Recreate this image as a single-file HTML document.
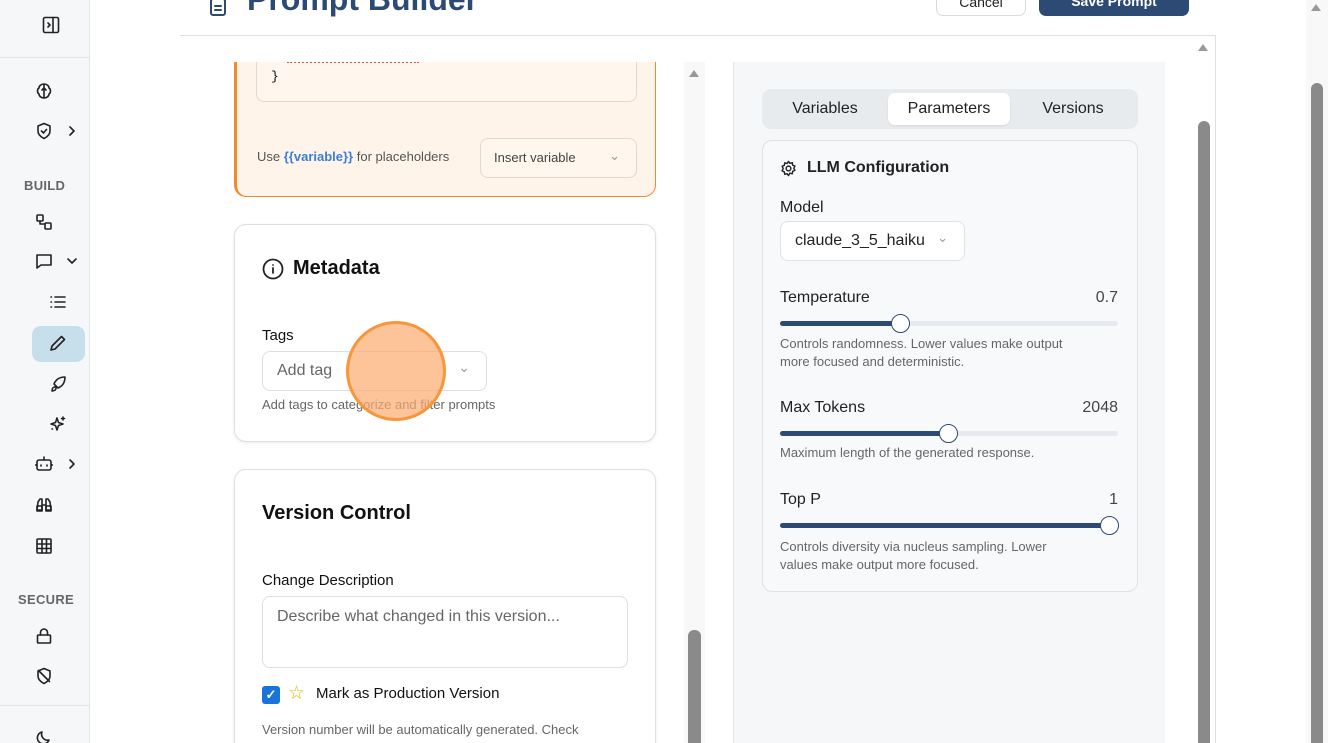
<!DOCTYPE html>
<html style="height:743px;overflow:hidden"><head><meta charset="utf-8"><style>
*{box-sizing:border-box;margin:0;padding:0}
html,body{height:743px;overflow:hidden}
body{width:1328px;background:#fff;font-family:"Liberation Sans",sans-serif;position:relative;color:#111}
.abs{position:absolute}
.ic{position:absolute;width:18px;height:18px;fill:none;stroke:#222;stroke-width:1.6;stroke-linecap:round;stroke-linejoin:round}
.lbl{position:absolute;font-size:13px;font-weight:bold;color:#666;letter-spacing:.3px}
.card{position:absolute;background:#fff;border:1px solid #dcdfe3;border-radius:12px;box-shadow:0 1px 3px rgba(0,0,0,.08)}
.track{position:absolute;left:780px;width:338px;height:5px;border-radius:3px;background:#e6e9ed}
.fill{position:absolute;left:0;top:0;height:5px;border-radius:3px;background:#2c4a73}
.thumb{position:absolute;width:19px;height:19px;border-radius:50%;background:#fff;border:1.5px solid #2c4a73;top:-7px}
</style></head><body>
<div class="abs" style="left:0;top:0;width:90px;height:743px;background:#f6f7f9;border-right:1px solid #e3e5e8"></div>
<div class="abs" style="left:0;top:57px;width:90px;height:1px;background:#e3e5e8"></div>
<div class="abs" style="left:0;top:705px;width:90px;height:1px;background:#e3e5e8"></div>
<svg class="ic" style="left:42px;top:16px" viewBox="0 0 18 18"><rect x="1.5" y="1.5" width="15" height="15" rx="1.5"/><path d="M11 1.5v15M6 7l2 2-2 2"/></svg>
<svg class="ic" style="left:35px;top:82px" viewBox="0 0 18 18"><path d="M9 2v14M9 2c-3 0-5 2-5 4-2 1-2 5 0 6 0 2 2 4 5 4M9 2c3 0 5 2 5 4 2 1 2 5 0 6 0 2-2 4-5 4M7 8l2-2 2 2"/></svg>
<svg class="ic" style="left:35px;top:122px" viewBox="0 0 18 18"><path d="M9 1.5l6 2.5v5c0 4-3 6-6 7.5-3-1.5-6-3.5-6-7.5V4z M6.5 9l2 2 3-3.5"/></svg>
<svg class="ic" style="left:63px;top:122px" viewBox="0 0 18 18"><path d="M7 5l4 4-4 4"/></svg>
<div class="lbl" style="left:24px;top:178px">BUILD</div>
<svg class="ic" style="left:35px;top:213px" viewBox="0 0 18 18"><rect x="2" y="2" width="6" height="6" rx="1"/><rect x="10" y="10" width="6" height="6" rx="1"/><path d="M5 8v3h5"/></svg>
<svg class="ic" style="left:35px;top:252px" viewBox="0 0 18 18"><path d="M2 3h14v10H6l-4 3z"/></svg>
<svg class="ic" style="left:63px;top:252px" viewBox="0 0 18 18"><path d="M5 7l4 4 4-4"/></svg>
<svg class="ic" style="left:49px;top:293px" viewBox="0 0 18 18"><path d="M6 4h10M6 9h10M6 14h10M2 4h.5M2 9h.5M2 14h.5"/></svg>
<div class="abs" style="left:32px;top:326px;width:53px;height:36px;border-radius:9px;background:#c6dfeb"></div>
<svg class="ic" style="left:49px;top:334px" viewBox="0 0 18 18"><path d="M12.5 2.5l3 3L6 15l-4 1 1-4z"/></svg>
<svg class="ic" style="left:49px;top:375px" viewBox="0 0 18 18"><path d="M6 12c-2 0-3 2-3 4 2 0 4-1 4-3M7 11l-2-2c2-5 6-7 11-7 0 5-2 9-7 11z"/></svg>
<svg class="ic" style="left:49px;top:415px" viewBox="0 0 18 18"><path d="M8 3l1.5 4.5L14 9l-4.5 1.5L8 15l-1.5-4.5L2 9l4.5-1.5zM14 2v3M12.5 3.5h3M3 14h.5"/></svg>
<svg class="ic" style="left:35px;top:455px" viewBox="0 0 18 18"><rect x="2" y="5" width="14" height="10" rx="2"/><path d="M9 5V2M6 10v1M12 10v1M0.5 10h1.5M16 10h1.5"/></svg>
<svg class="ic" style="left:63px;top:455px" viewBox="0 0 18 18"><path d="M7 5l4 4-4 4"/></svg>
<svg class="ic" style="left:35px;top:496px" viewBox="0 0 18 18"><path d="M2 14l1-8 2-3h2v11zM16 14l-1-8-2-3h-2v11zM7 9h4"/><rect x="2" y="10" width="5" height="5"/><rect x="11" y="10" width="5" height="5"/></svg>
<svg class="ic" style="left:35px;top:537px" viewBox="0 0 18 18"><rect x="2" y="2" width="14" height="14" rx="1"/><path d="M2 7h14M2 11.5h14M7 2v14M11.5 2v14"/></svg>
<div class="lbl" style="left:18px;top:592px">SECURE</div>
<svg class="ic" style="left:35px;top:627px" viewBox="0 0 18 18"><rect x="2.5" y="8" width="13" height="8" rx="1"/><path d="M5.5 8V5.5a3.5 3.5 0 0 1 7 0V8"/></svg>
<svg class="ic" style="left:35px;top:667px" viewBox="0 0 18 18"><path d="M9 1.5l6 2.5v5c0 4-3 6-6 7.5-3-1.5-6-3.5-6-7.5V4zM3.5 3.5l11 11"/></svg>
<svg class="ic" style="left:35px;top:729px" viewBox="0 0 18 18"><path d="M14 11A6 6 0 0 1 7 3a6 6 0 1 0 7 8z"/></svg>

<svg class="ic" style="left:209px;top:-1px;stroke:#2c4a73;stroke-width:2" viewBox="0 0 18 18"><rect x="2" y="0" width="14" height="16" rx="2"/><path d="M6 7h6M6 11h6"/></svg>
<div class="abs" style="left:247px;top:-17px;font-size:32px;line-height:32px;font-weight:bold;color:#2c4a73">Prompt Builder</div>
<div class="abs" style="left:936px;top:-12px;width:90px;height:28px;border:1px solid #d7dade;border-radius:7px;font-size:14px;text-align:center;line-height:26px;color:#222">Cancel</div>
<div class="abs" style="left:1039px;top:-12px;width:150px;height:28px;background:#2c4a73;border-radius:7px;font-size:14px;font-weight:bold;color:#fff;text-align:center;line-height:26px">Save Prompt</div>
<div class="abs" style="left:180px;top:35px;width:1035px;height:1px;background:#dcdfe3"></div>
<div class="abs" style="left:1215px;top:35px;width:1px;height:708px;background:#dcdfe3"></div>

<div class="abs" style="left:234px;top:40px;width:422px;height:157px;background:#fff4ea;border:1.5px solid #f08a2c;border-left-width:3px;border-top:none;border-radius:0 0 12px 12px"></div>
<div class="abs" style="left:256px;top:40px;width:381px;height:62px;border:1px solid #e4d8cc;border-top:none;border-radius:0 0 8px 8px;background:#fff6ee"></div>
<div class="abs" style="left:287px;top:61px;width:132px;border-top:2px dotted #e05050"></div>
<div class="abs" style="left:271px;top:69px;font-family:'Liberation Mono',monospace;font-size:13px">}</div>
<div class="abs" style="left:257px;top:149px;font-size:13px;color:#555">Use <b style="color:#3b7dd8">{{variable}}</b> for placeholders</div>
<div class="abs" style="left:480px;top:138px;width:157px;height:40px;border:1px solid #e4d8cc;border-radius:8px;background:#fff6ee;font-size:13px;color:#444;padding:11px 0 0 13px">Insert variable<span style="position:absolute;right:16px;top:9px;color:#999">⌄</span></div>
<div class="abs" style="left:180px;top:36px;width:500px;height:26px;background:#fff"></div>

<div class="card" style="left:234px;top:224px;width:422px;height:218px"></div>
<svg class="ic" style="left:262px;top:258px;width:22px;height:22px;stroke-width:1.8" viewBox="0 0 22 22"><circle cx="11" cy="11" r="9.5"/><path d="M11 10v5M11 7h.01"/></svg>
<div class="abs" style="left:293px;top:257px;font-size:20px;font-weight:bold">Metadata</div>
<div class="abs" style="left:262px;top:327px;font-size:15px">Tags</div>
<div class="abs" style="left:262px;top:351px;width:225px;height:40px;border:1px solid #dcdfe3;border-radius:8px;font-size:16px;color:#666;padding:10px 0 0 14px">Add tag<span style="position:absolute;right:16px;top:7px;color:#999;font-size:14px">⌄</span></div>
<div class="abs" style="left:262px;top:397px;font-size:13px;color:#666">Add tags to categorize and filter prompts</div>
<div class="abs" style="left:346px;top:321px;width:100px;height:100px;border-radius:50%;background:rgba(252,170,110,.7);border:3px solid #f7963a"></div>

<div class="card" style="left:234px;top:469px;width:422px;height:300px"></div>
<div class="abs" style="left:262px;top:502px;font-size:20px;font-weight:bold">Version Control</div>
<div class="abs" style="left:262px;top:572px;font-size:15px">Change Description</div>
<div class="abs" style="left:262px;top:596px;width:366px;height:72px;border:1px solid #dcdfe3;border-radius:8px;font-size:16px;color:#666;padding:11px 0 0 14px">Describe what changed in this version...</div>
<div class="abs" style="left:262px;top:686px;width:18px;height:18px;background:#1a73d9;border-radius:3px;color:#fff;font-size:13px;text-align:center;line-height:18px;font-weight:bold">✓</div>
<div class="abs" style="left:288px;top:682px;font-size:19px;color:#e8b400">☆</div>
<div class="abs" style="left:316px;top:685px;font-size:15px">Mark as Production Version</div>
<div class="abs" style="left:262px;top:722px;font-size:13px;color:#666">Version number will be automatically generated. Check</div>

<div class="abs" style="left:684px;top:62px;width:21px;height:681px;background:#f8f8f8"></div>
<div class="abs" style="left:689px;top:70px;width:0;height:0;border-left:5px solid transparent;border-right:5px solid transparent;border-bottom:7px solid #999"></div>
<div class="abs" style="left:688px;top:630px;width:13px;height:120px;background:#8a8a8a;border-radius:6px"></div>

<div class="abs" style="left:733px;top:62px;width:432px;height:681px;background:#f6f7f9;border-left:1px solid #e1e4e8"></div>
<div class="abs" style="left:762px;top:89px;width:376px;height:40px;background:#e8ebee;border-radius:9px"></div>
<div class="abs" style="left:888px;top:93px;width:122px;height:32px;background:#fff;border-radius:7px;box-shadow:0 1px 2px rgba(0,0,0,.08)"></div>
<div class="abs" style="left:762px;top:100px;width:126px;text-align:center;font-size:16px;color:#222">Variables</div>
<div class="abs" style="left:888px;top:100px;width:122px;text-align:center;font-size:16px;color:#222">Parameters</div>
<div class="abs" style="left:1010px;top:100px;width:126px;text-align:center;font-size:16px;color:#222">Versions</div>

<div class="abs" style="left:762px;top:140px;width:376px;height:452px;background:#f8f9fa;border:1px solid #dfe2e6;border-radius:10px"></div>
<svg class="ic" style="left:780px;top:160px;width:17px;height:17px;stroke-width:1.5" viewBox="0 0 18 18"><circle cx="9" cy="9" r="2.5"/><path d="M9 1.5l1.5 2 2.5-.7.4 2.6 2.4 1-1.2 2.3 1.2 2.3-2.4 1-.4 2.6-2.5-.7L9 16.5l-1.5-2-2.5.7-.4-2.6-2.4-1L3.4 9 2.2 6.6l2.4-1L5 3l2.5.7z"/></svg>
<div class="abs" style="left:807px;top:159px;font-size:16px;font-weight:bold;color:#222">LLM Configuration</div>
<div class="abs" style="left:780px;top:199px;font-size:16px;color:#222">Model</div>
<div class="abs" style="left:780px;top:221px;width:185px;height:40px;border:1px solid #dfe2e6;border-radius:8px;background:#fff;font-size:16px;color:#222;padding:10px 0 0 14px">claude_3_5_haiku<span style="position:absolute;right:16px;top:8px;color:#999;font-size:13px">⌄</span></div>

<div class="abs" style="left:780px;top:289px;font-size:16px;color:#222">Temperature</div>
<div class="abs" style="left:1060px;top:289px;width:58px;text-align:right;font-size:16px;color:#444">0.7</div>
<div class="track" style="top:321px"><div class="fill" style="width:121px"></div><div class="thumb" style="left:111px"></div></div>
<div class="abs" style="left:780px;top:335px;font-size:13px;line-height:18px;color:#666">Controls randomness. Lower values make output<br>more focused and deterministic.</div>

<div class="abs" style="left:780px;top:399px;font-size:16px;color:#222">Max Tokens</div>
<div class="abs" style="left:1040px;top:399px;width:78px;text-align:right;font-size:16px;color:#444">2048</div>
<div class="track" style="top:431px"><div class="fill" style="width:169px"></div><div class="thumb" style="left:159px"></div></div>
<div class="abs" style="left:780px;top:445px;font-size:13px;color:#666">Maximum length of the generated response.</div>

<div class="abs" style="left:780px;top:491px;font-size:16px;color:#222">Top P</div>
<div class="abs" style="left:1060px;top:491px;width:58px;text-align:right;font-size:16px;color:#444">1</div>
<div class="track" style="top:523px"><div class="fill" style="width:330px"></div><div class="thumb" style="left:320px"></div></div>
<div class="abs" style="left:780px;top:538px;font-size:13px;line-height:18px;color:#666">Controls diversity via nucleus sampling. Lower<br>values make output more focused.</div>

<div class="abs" style="left:1198px;top:44px;width:0;height:0;border-left:5px solid transparent;border-right:5px solid transparent;border-bottom:7px solid #999"></div>
<div class="abs" style="left:1198px;top:121px;width:12px;height:630px;background:#8a8a8a;border-radius:6px"></div>

<div class="abs" style="left:1306px;top:0;width:22px;height:743px;background:#f8f8f8"></div>
<div class="abs" style="left:1311px;top:4px;width:0;height:0;border-left:5px solid transparent;border-right:5px solid transparent;border-bottom:7px solid #999"></div>
<div class="abs" style="left:1311px;top:83px;width:12px;height:670px;background:#8a8a8a;border-radius:6px"></div>
</body></html>
